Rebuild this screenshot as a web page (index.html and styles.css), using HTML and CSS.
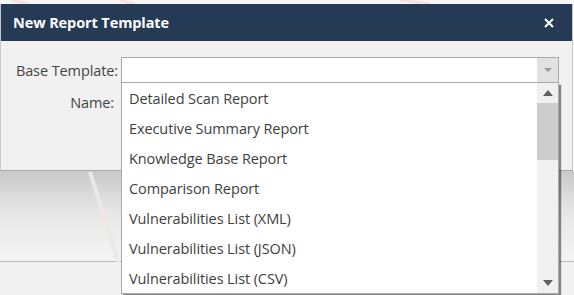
FILE: index.html
```html
<!DOCTYPE html>
<html lang="en">
<head>
    <meta charset="UTF-8">
    <title>New Report Template</title>
    <link rel="stylesheet" href="styles.css">
</head>
<body>
    <div class="page">
        <svg class="mark" width="574" height="295" viewBox="0 0 574 295">
            <path d="M90 172 L118 262" stroke="#efe6e6" stroke-width="4" fill="none"/>
            <path d="M10 0 L30 4 M120 0 L135 4 M400 0 L430 4" stroke="#f3e2e2" stroke-width="3" fill="none"/>
        </svg>
        <div class="dialog">
            <div class="dialog-head">
                <span class="dialog-title">New Report Template</span>
                <svg class="close" width="10" height="10" viewBox="0 0 10 10">
                    <path d="M1 1 L9 9 M9 1 L1 9" stroke="#fff" stroke-width="2"/>
                </svg>
            </div>
            <div class="dialog-body">
                <div class="row">
                    <label class="lbl">Base Template:</label>
                    <div class="select">
                        <span class="select-btn"><i class="tri-down small"></i></span>
                    </div>
                </div>
                <div class="row">
                    <label class="lbl name">Name:</label>
                    <div class="input"></div>
                </div>
            </div>
        </div>
        <div class="shade"></div>
        <div class="footer"></div>

        <div class="list">
            <ul class="items">
                <li>Detailed Scan Report</li>
                <li>Executive Summary Report</li>
                <li>Knowledge Base Report</li>
                <li>Comparison Report</li>
                <li>Vulnerabilities List (XML)</li>
                <li>Vulnerabilities List (JSON)</li>
                <li>Vulnerabilities List (CSV)</li>
            </ul>
            <div class="scroll">
                <span class="sbtn"><i class="tri-up"></i></span>
                <span class="thumb"></span>
                <span class="track"></span>
                <span class="sbtn"><i class="tri-down"></i></span>
            </div>
        </div>
    </div>
</body>
</html>
```

FILE: styles.css
```css
* {
    margin: 0;
    padding: 0;
    list-style: none;
    box-sizing: border-box;
}
body {
    font-family: "Open Sans", "Noto Sans", sans-serif;
    background: #f0f0f0;
}
.page {
    width: 574px;
    height: 295px;
    position: relative;
    overflow: hidden;
    background: #f7f7f7;
    padding-top: 4px;
}
.mark {
    position: absolute;
    left: 0;
    top: 0;
}
.dialog {
    position: relative;
    width: 573px;
    background: #f1f1f1;
    border-left: 1px solid #c8c8c8;
    border-right: 1px solid #c8c8c8;
    border-bottom: 1px solid #a9a9a9;
}
.dialog-head {
    height: 37px;
    background: #253a55;
    display: flex;
    align-items: center;
    justify-content: space-between;
    padding: 0 18px 0 12px;
}
.dialog-title {
    color: #fff;
    font-weight: 700;
    font-size: 14.5px;
    letter-spacing: -0.1px;
}
.dialog-body {
    height: 129px;
    padding-top: 16px;
}
.row {
    display: flex;
    align-items: center;
    height: 26px;
    margin-bottom: 6px;
}
.lbl {
    width: 120px;
    padding-right: 3px;
    text-align: right;
    color: #444;
    font-size: 14.5px;
    letter-spacing: -0.1px;
}
.lbl.name {
    padding-right: 7px;
}
.select, .input {
    width: 438px;
    height: 26px;
    background: #fff;
    border: 1px solid #aaa;
    display: flex;
    justify-content: flex-end;
}
.select-btn {
    width: 21px;
    background: #e1e1e1;
    display: flex;
    align-items: center;
    justify-content: center;
}
.shade {
    height: 90px;
    background: linear-gradient(#c9c9c9, #e6e6e6 45%, #f4f4f4);
}
.footer {
    height: 40px;
    border-top: 1px solid #b9b9b9;
    background: #f1f1f1;
}
.list {
    position: absolute;
    left: 121px;
    top: 83px;
    width: 438px;
    height: 211px;
    background: #fff;
    border: 1px solid #aaa;
    border-top: 0;
    box-shadow: 2px 2px 1px rgba(0, 0, 0, 0.45);
    display: flex;
}
.items {
    flex: 1;
}
.items li {
    height: 30px;
    line-height: 31px;
    padding-left: 7px;
    color: #3e3e3e;
    font-size: 14.5px;
    letter-spacing: -0.1px;
}
.scroll {
    width: 21px;
    background: #f0f0f0;
    display: flex;
    flex-direction: column;
}
.sbtn {
    height: 20px;
    display: flex;
    align-items: center;
    justify-content: center;
}
.thumb {
    height: 57px;
    background: #cdcdcd;
}
.track {
    flex: 1;
}
.tri-up, .tri-down {
    display: block;
    width: 0;
    height: 0;
    border-left: 5px solid transparent;
    border-right: 5px solid transparent;
}
.tri-up {
    border-bottom: 6px solid #606060;
}
.tri-down {
    border-top: 6px solid #606060;
}
.tri-down.small {
    border-left-width: 4px;
    border-right-width: 4px;
    border-top: 4px solid #9a9a9a;
}
```
